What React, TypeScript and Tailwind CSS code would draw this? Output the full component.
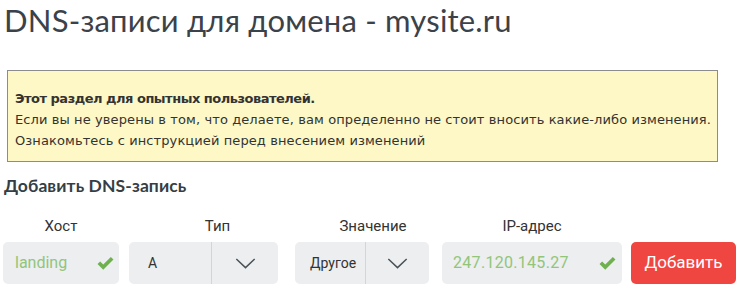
import React from 'react';

const Check = ({ className }: { className?: string }) => (
  <svg viewBox="0 0 20 16" className={className} fill="currentColor">
    <path d="M1.5 8.6 L4.3 5.9 L7.6 9.1 L15.7 1.1 L18.5 3.8 L7.6 14.6 Z" />
  </svg>
);

const Chevron = () => (
  <svg viewBox="0 0 22 12" className="w-[21px] h-[11px] text-[#4a5258]" fill="none" stroke="currentColor" strokeWidth="1.6">
    <path d="M1 1 L11 10.5 L21 1" />
  </svg>
);

const App = () => {
  return (
    <main className="w-[740px] h-[292px] bg-white overflow-hidden" style={{ fontFamily: 'Roboto, sans-serif' }}>
      <h1 className="pl-[4px] pt-[1px] text-[31px] leading-[38px] text-[#3b4249] font-[Lato,sans-serif] tracking-[0.2px]">
        DNS-записи для домена - mysite.ru
      </h1>

      <div className="ml-[7px] mt-[31px] w-[711px] h-[92px] border border-[#8c8c8c] bg-[#fdf8c6] pl-[7px] pt-[17px] text-[13px] leading-[21px] text-[#333] font-['DejaVu_Sans',sans-serif] whitespace-nowrap">
        <p className="font-bold tracking-[-0.5px]">Этот раздел для опытных пользователей.</p>
        <p className="tracking-[0.1px]">Если вы не уверены в том, что делаете, вам определенно не стоит вносить какие-либо изменения.</p>
        <p className="tracking-[0.1px]">Ознакомьтесь с инструкцией перед внесением изменений</p>
      </div>

      <h2 className="ml-[4px] mt-[13px] text-[17.5px] leading-[22px] font-bold text-[#363e45] font-[Lato,sans-serif] tracking-[0.1px]">
        Добавить DNS-запись
      </h2>

      <div className="flex mt-[19px] ml-[3px] text-[#333]">
        <div className="w-[116px] flex flex-col">
          <div className="text-center text-[15px] leading-[20px] h-[20px]">Хост</div>
          <div className="mt-[6px] h-[42px] rounded-[5px] bg-[#eceef0] flex items-center pl-[12px] pr-[4px]">
            <span className="flex-1 text-[16px] text-[#92c57a]">landing</span>
            <Check className="w-[19px] h-[15px] text-[#6fb14f]" />
          </div>
        </div>

        <div className="w-[149px] ml-[10px] flex flex-col">
          <div className="text-center pl-[28px] text-[15px] leading-[20px] h-[20px]">Тип</div>
          <div className="mt-[6px] h-[42px] rounded-[5px] bg-[#eceef0] flex items-stretch">
            <span className="w-[83px] flex items-center pl-[19px] text-[14px] border-r border-[#d3d6d9]">A</span>
            <span className="flex-1 flex items-center justify-center">
              <Chevron />
            </span>
          </div>
        </div>

        <div className="w-[134px] ml-[17px] flex flex-col">
          <div className="text-center pl-[22px] text-[15px] leading-[20px] h-[20px]">Значение</div>
          <div className="mt-[6px] h-[42px] rounded-[5px] bg-[#eceef0] flex items-stretch">
            <span className="w-[71px] flex items-center pl-[15px] text-[14px] border-r border-[#d3d6d9]">Другое</span>
            <span className="flex-1 flex items-center justify-center">
              <Chevron />
            </span>
          </div>
        </div>

        <div className="w-[180px] ml-[13px] flex flex-col">
          <div className="text-center text-[15px] leading-[20px] h-[20px]">IP-адрес</div>
          <div className="mt-[6px] h-[42px] rounded-[5px] bg-[#eceef0] flex items-center pl-[11px] pr-[5px]">
            <span className="flex-1 text-[16px] tracking-[0.3px] text-[#92c57a]">247.120.145.27</span>
            <Check className="w-[19px] h-[15px] text-[#6fb14f]" />
          </div>
        </div>

        <div className="ml-[9px] flex flex-col justify-end">
          <button className="h-[42px] w-[105px] rounded-[5px] bg-[#ef4641] text-white text-[17px]">
            Добавить
          </button>
        </div>
      </div>
    </main>
  );
};

export default App;
